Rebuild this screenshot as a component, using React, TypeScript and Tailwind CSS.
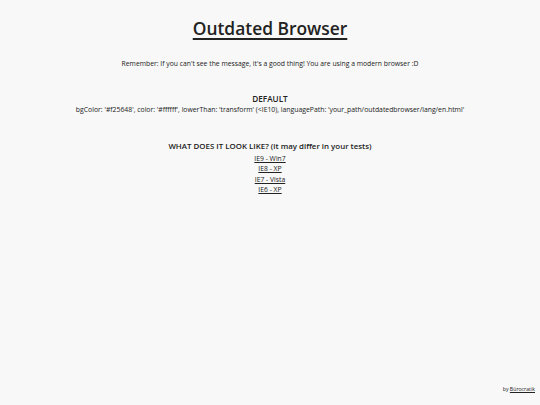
export default function App() {
  return (
    <div className="relative w-[540px] h-[405px] bg-[#f8f8f8] text-[#222] overflow-hidden" style={{ fontFamily: '"Open Sans", sans-serif' }}>
      <div className="flex flex-col items-center text-center">
        <h1 className="mt-[14px] text-[17.4px] leading-[28px] font-semibold underline decoration-[1.5px] underline-offset-[3px]">Outdated Browser</h1>
        <p className="mt-[17px] text-[6.8px] leading-[10px]">Remember: If you can't see the message, it's a good thing! You are using a modern browser :D</p>
        <h2 className="mt-[24px] text-[8.2px] leading-[12px] font-semibold">DEFAULT</h2>
        <p className="mt-[0px] text-[6.85px] leading-[10px]">bgColor: '#f25648', color: '#ffffff', lowerThan: 'transform' (&lt;IE10), languagePath: 'your_path/outdatedbrowser/lang/en.html'</p>
        <h2 className="mt-[25px] text-[7.9px] leading-[12px] font-semibold">WHAT DOES IT LOOK LIKE? (it may differ in your tests)</h2>
        <div className="mt-[2px] flex flex-col items-center text-[6.8px] leading-[10.3px]">
          <a className="underline">IE9 - Win7</a>
          <a className="underline">IE8 - XP</a>
          <a className="underline">IE7 - Vista</a>
          <a className="underline">IE6 - XP</a>
        </div>
      </div>
      <div className="absolute right-[5px] bottom-[12px] text-[5.2px] leading-[8px]">by <a className="underline">Bürocratik</a></div>
    </div>
  );
}
